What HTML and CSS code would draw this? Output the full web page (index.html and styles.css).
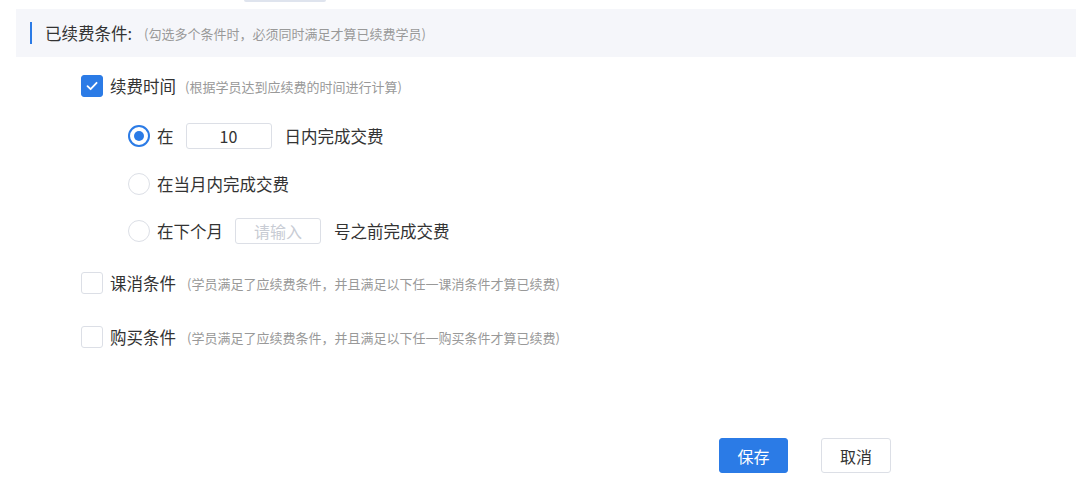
FILE: index.html
```html
<!DOCTYPE html>
<html lang="zh-CN">
<head>
    <meta charset="UTF-8">
    <meta name="viewport" content="width=device-width, initial-scale=1.0">
    <title>已续费条件</title>
    <link rel="stylesheet" href="styles.css">
</head>
<body>
    <div class="page">
        <!-- bottom edge of the field above, scrolled out of view -->
        <div class="cut-field"></div>

        <div class="section-header">
            <span class="section-title">已续费条件:</span>
            <span class="hint top">(勾选多个条件时，必须同时满足才算已续费学员)</span>
        </div>

        <div class="form">
            <!-- 续费时间 -->
            <div class="check-row first">
                <span class="checkbox checked">
                    <svg width="14" height="14" viewBox="0 0 14 14"><path d="M2.5 7.2 L5.6 10.2 L11.6 3.8" fill="none" stroke="#fff" stroke-width="1.8" stroke-linecap="round" stroke-linejoin="round"/></svg>
                </span>
                <span class="label">续费时间</span>
                <span class="hint">(根据学员达到应续费的时间进行计算)</span>
            </div>

            <div class="radio-row r1">
                <span class="radio checked"></span>
                <span class="label">在</span>
                <span class="input">10</span>
                <span class="label">日内完成交费</span>
            </div>
            <div class="radio-row r2">
                <span class="radio"></span>
                <span class="label">在当月内完成交费</span>
            </div>
            <div class="radio-row r3">
                <span class="radio"></span>
                <span class="label">在下个月</span>
                <span class="input placeholder">请输入</span>
                <span class="label">号之前完成交费</span>
            </div>

            <!-- 课消条件 -->
            <div class="check-row second">
                <span class="checkbox"></span>
                <span class="label">课消条件</span>
                <span class="hint wide">(学员满足了应续费条件，并且满足以下任一课消条件才算已续费)</span>
            </div>

            <!-- 购买条件 -->
            <div class="check-row third">
                <span class="checkbox"></span>
                <span class="label">购买条件</span>
                <span class="hint wide">(学员满足了应续费条件，并且满足以下任一购买条件才算已续费)</span>
            </div>
        </div>

        <div class="actions">
            <button class="btn primary">保存</button>
            <button class="btn">取消</button>
        </div>
    </div>
</body>
</html>
```

FILE: styles.css
```css
body {
    margin: 0;
    padding: 0;
    font-family: "Noto Sans CJK SC", "Liberation Sans", sans-serif;
    color: #333;
    background: #fff;
}

.page {
    width: 1076px;
    height: 487px;
    overflow: hidden;
}

.cut-field {
    width: 82px;
    height: 2px;
    margin-left: 244px;
    background: #dfe4ee;
    border-radius: 0 0 3px 3px;
}

.section-header {
    display: flex;
    align-items: center;
    height: 48px;
    margin: 7px 0 0 16px;
    padding-left: 14px;
    background-color: #f5f6fa;
}

.section-header::before {
    content: '';
    width: 2px;
    height: 22px;
    margin-right: 13px;
    background-color: #2b7be6;
}

.section-title {
    font-size: 16.5px;
}

.hint {
    font-size: 13px;
    color: #999;
    margin-left: 9px;
}

.hint.top {
    margin-left: 12px;
}

.hint.wide {
    margin-left: 11px;
}

.form {
    padding-left: 81px;
}

.check-row {
    display: flex;
    align-items: center;
    height: 22px;
}

.check-row.first { margin-top: 18px; }
.check-row.second { margin-top: 28px; }
.check-row.third { margin-top: 32px; }

.checkbox {
    width: 20px;
    height: 20px;
    border: 1px solid #dcdfe6;
    border-radius: 3px;
    margin-right: 7px;
    display: flex;
    align-items: center;
    justify-content: center;
    box-sizing: content-box;
}

.checkbox.checked {
    background-color: #2b7be6;
    border-color: #2b7be6;
}

.label {
    font-size: 16.5px;
    white-space: nowrap;
}

.radio-row {
    display: flex;
    align-items: center;
    height: 26px;
    margin-left: 47px;
}

.radio-row.r1 { margin-top: 26px; }
.radio-row.r2 { margin-top: 22px; }
.radio-row.r3 { margin-top: 21px; }

.radio {
    width: 20px;
    height: 20px;
    border: 1px solid #dcdfe6;
    border-radius: 50%;
    margin-right: 7px;
    display: flex;
    align-items: center;
    justify-content: center;
}

.radio.checked {
    border: 2px solid #2b7be6;
    width: 18px;
    height: 18px;
}

.radio.checked::after {
    content: '';
    width: 10px;
    height: 10px;
    border-radius: 50%;
    background-color: #2b7be6;
}

.input {
    width: 84px;
    height: 24px;
    border: 1px solid #dcdfe6;
    border-radius: 3px;
    margin: 0 13px 0 12px;
    font-size: 16px;
    text-align: center;
    line-height: 24px;
}

.input.placeholder {
    color: #c8ccd4;
}

.actions {
    display: flex;
    gap: 33px;
    margin: 90px 0 0 719px;
}

.btn {
    height: 35px;
    width: 70px;
    font-family: inherit;
    font-size: 16px;
    color: #333;
    background: #fff;
    border: 1px solid #dcdfe6;
    border-radius: 3px;
    padding: 0;
}

.btn.primary {
    width: 69px;
    color: #fff;
    background-color: #2b7be6;
    border-color: #2b7be6;
}
```
